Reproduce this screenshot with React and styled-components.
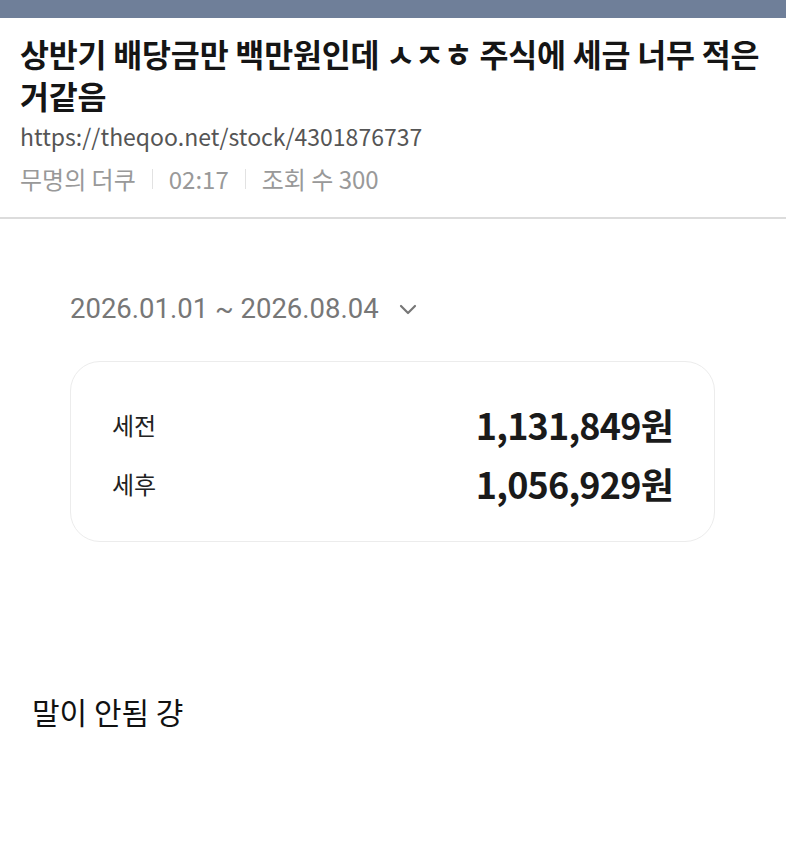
import React from "react";
import styled, { createGlobalStyle } from "styled-components";

const GlobalStyle = createGlobalStyle`
  html, body {
    margin: 0;
    padding: 0;
    background: #fff;
    font-family: "Noto Sans CJK KR", "Noto Sans", sans-serif;
  }
`;

const TopBar = styled.div`
  height: 18px;
  background: #6f7f99;
`;

const Header = styled.header`
  padding: 14px 20px 23px;
  border-bottom: 2px solid #dcdcdc;
`;

const Title = styled.h1`
  margin: 0;
  font-size: 31.5px;
  font-weight: 700;
  line-height: 42px;
  letter-spacing: -0.2px;
  color: #151515;
  word-break: keep-all;
`;

const Url = styled.div`
  margin-top: 5px;
  font-size: 23px;
  line-height: 30px;
  color: #555;
`;

const Meta = styled.div`
  display: flex;
  align-items: center;
  margin-top: 13px;
  font-size: 24px;
  line-height: 30px;
  color: #999;
`;

const Sep = styled.span`
  width: 1px;
  height: 20px;
  background: #e2e2e2;
  margin: 0 16px;
`;

const Body = styled.main`
  padding: 73px 70px 0;
`;

const DateRow = styled.div`
  display: flex;
  align-items: center;
  gap: 20px;
  font-family: "Roboto", "Noto Sans", sans-serif;
  font-size: 27.5px;
  color: #777;
  line-height: 34px;
`;

const Card = styled.div`
  margin-top: 35px;
  width: 645px;
  box-sizing: border-box;
  border: 1px solid #ececec;
  border-radius: 30px;
  padding: 40px 41px 36px 41px;
  display: flex;
  flex-direction: column;
  gap: 15px;
`;

const Row = styled.div`
  display: flex;
  justify-content: space-between;
  align-items: center;
`;

const Label = styled.span`
  font-size: 24px;
  color: #222;
`;

const Value = styled.span`
  font-size: 36px;
  font-weight: 700;
  color: #1a1a1a;
  letter-spacing: -0.8px;
  line-height: 44px;
`;

const Comment = styled.p`
  margin: 149px 0 0 32px;
  font-size: 30px;
  color: #111;
  line-height: 40px;
`;

const Chevron = () => (
  <svg width="18" height="12" viewBox="0 0 18 12">
    <path d="M2 3 L9 10 L16 3" fill="none" stroke="#777" strokeWidth="2.2" strokeLinecap="round" strokeLinejoin="round" />
  </svg>
);

export default function App() {
  return (
    <>
      <GlobalStyle />
      <TopBar />
      <Header>
        <Title>상반기 배당금만 백만원인데 ㅅㅈㅎ 주식에 세금 너무 적은 거같음</Title>
        <Url>https://theqoo.net/stock/4301876737</Url>
        <Meta>
          <span>무명의 더쿠</span>
          <Sep />
          <span>02:17</span>
          <Sep />
          <span>조회 수 300</span>
        </Meta>
      </Header>
      <Body>
        <DateRow>
          <span>2026.01.01 ~ 2026.08.04</span>
          <Chevron />
        </DateRow>
        <Card>
          <Row>
            <Label>세전</Label>
            <Value>1,131,849원</Value>
          </Row>
          <Row>
            <Label>세후</Label>
            <Value>1,056,929원</Value>
          </Row>
        </Card>
      </Body>
      <Comment>말이 안됨 걍</Comment>
    </>
  );
}
